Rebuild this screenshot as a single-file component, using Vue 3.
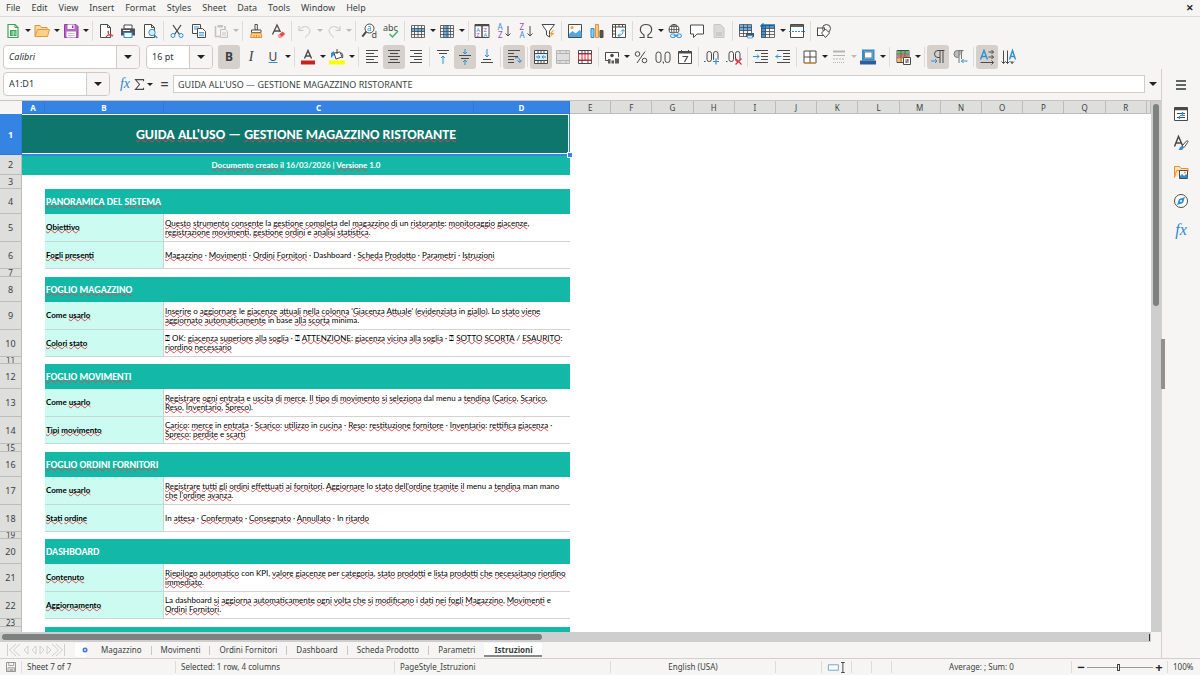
<script setup>
const menus = ['File', 'Edit', 'View', 'Insert', 'Format', 'Styles', 'Sheet', 'Data', 'Tools', 'Window', 'Help']

const K = '#4a4a4a'
const B = '#2d8fd6'
const tableGrid = `<path d="M1.5 2.5h13v12h-13zM1.5 5.5h13M1.5 8.5h13M1.5 11.500h13M4.5 2.5v12M8 2.5v12M11.500 2.5v12" fill="none" stroke="${K}" stroke-width=".8"/>`
const lines = (rows) => rows.map(([x1, x2, y]) => `<path d="M${x1} ${y}H${x2}" stroke="${K}"/>`).join('')
const letter = (x, y, t, c, s = 7) => `<text x="${x}" y="${y}" fill="${c}" font-size="${s}" font-family="Noto Sans, sans-serif">${t}</text>`

const art = {
  new: `<path d="M3 1.5h7l3 3v10H3z" fill="#fff" stroke="#3fa455" stroke-width="1.2"/><path d="M10 1.500v3h3" fill="none" stroke="#3fa455"/><path d="M5 7h6.500v6H5z" fill="#3fa455"/><path d="M6 9h5M6 11h5M8.300 8v5" stroke="#d8f3dd" stroke-width=".7"/>`,
  open: `<path d="M1 13V2.500h5l1.500 2h5.500V7" fill="#f9d9a0" stroke="#d99540"/><path d="M1 13.500 3.500 6.500h12l-2 7z" fill="#fbcf86" stroke="#e09a45"/>`,
  save: `<path d="M1.500 1.500h11.500l2 2v11H1.500z" fill="#b665c4" stroke="#8f3ea3"/><path d="M4.500 1.500h7v4.500h-7z" fill="#fff"/><path d="M9 2.500h1.500v2.500H9z" fill="#8f3ea3"/><path d="M3.500 8.500h9.500v6H3.500z" fill="#fff"/><path d="M5 10.500h6.500M5 12.500h6.500" stroke="#cdb5d3"/>`,
  pdf: `<path d="M2.500 1.500h7l3 3v10h-10z" fill="#fff" stroke="${K}"/><path d="M9.500 1.500v3h3" fill="none" stroke="${K}"/><path d="M8 14c2-1 3-4 2.500-5.500-.6-1.500-1 .5 0 2 1 1.500 2.500 2.500 4 2.500 1.500-.5-1-1.500-3-1-2 .3-3.500 1.200-3.500 2z" fill="#fff" stroke="#d6293a"/>`,
  print: `<path d="M4 2h8v4H4z" fill="#fff" stroke="${K}"/><path d="M1 5.500h14v7H1z" fill="#4f5357"/><path d="M4 9.500h8v5H4z" fill="#fff" stroke="${B}"/><path d="M3 7.500h7" stroke="#fff"/>`,
  preview: `<path d="M2.500 1.500h7l3 3v10h-10z" fill="#fff" stroke="${K}"/><path d="M9.500 1.500v3h3" fill="none" stroke="${K}"/><circle cx="10" cy="9.500" r="3.200" fill="#d7ecfa" stroke="${B}"/><path d="m12.300 12 3 3" stroke="${B}" stroke-width="1.300"/>`,
  cut: `<path d="M4 2l6.500 9.500M12 2 5.500 11.500" stroke="${K}" stroke-width="1.300"/><circle cx="4" cy="12.500" r="2" fill="none" stroke="${B}"/><circle cx="12" cy="12.500" r="2" fill="none" stroke="${B}"/>`,
  copy: `<path d="M1.500 1.500h8v9h-8z" fill="#fff" stroke="${K}"/><path d="M3 4h5M3 6h3" stroke="${B}"/><path d="M6.500 5.500h5l3 3v6h-8z" fill="#fff" stroke="${K}"/><path d="M8 9.500h5M8 11h5M8 12.700h5" stroke="${B}" stroke-width=".8"/>`,
  paste: `<path d="M2.500 3v10.500H7M12 3v3" fill="none" stroke="#c2c2c2" stroke-width="1.600"/><path d="M4.500 2h5.500v2.500H4.500z" fill="#c2c2c2"/><path d="M7.500 6.500h5l2 2v6h-7z" fill="#f2f2f2" stroke="#c2c2c2"/><path d="M9 10h4M9 12h4" stroke="#c9c9c9"/>`,
  brush: `<path d="M7 1.500h2.300v5.500H7z" fill="#fff" stroke="${K}"/><path d="M3.500 7h9.500v2.500H3.500z" fill="#fff" stroke="${K}"/><path d="M3.500 10h9.500l.8 4.500H2.500z" fill="#fbd39a" stroke="#e8912d"/><path d="M6 12v2M8.500 12v2M11 12v2" stroke="#e8912d"/>`,
  clear: `<path d="M2.500 11.500 7 2l3.500 7M4.500 8h5" fill="none" stroke="${K}" stroke-width="1.300"/><path d="m8 12.500 4.500-4 2.700 2.500-4.500 4H9z" fill="#e5484d"/><path d="m7.500 12.500 1.700-1.500 2.500 2.700-1.200 1H9z" fill="#f5a3a5"/>`,
  undo: `<path d="M2 3v4.500h4.500M2 7.500C4 4 8 2.500 11 4.500c3.500 2.500 2 6-3 10" fill="none" stroke="#c6c6c6"/>`,
  redo: `<path d="M14 3v4.500H9.500M14 7.500C12 4 8 2.500 5 4.500 1.500 7 3 10.500 8 14.500" fill="none" stroke="#c6c6c6"/>`,
  find: `<circle cx="8.500" cy="5.500" r="4.500" fill="#fff" stroke="${K}"/><path d="m5.300 8.700-4 5" stroke="${K}" stroke-width="2"/>${letter(6, 8, 'a', B, 8)}${letter(10.500, 15, 'd', K, 9)}`,
  spell: `${letter(0, 8, 'abc', K, 9)}<path d="m6.500 11 3 3 5.500-6" fill="none" stroke="#43b36b" stroke-width="1.500"/>`,
  row: `<path d="M1 5h14v4H1z" fill="#64b1ec"/>${tableGrid}`,
  col: `<path d="M5 2h5v13H5z" fill="#64b1ec"/>${tableGrid}`,
  sort: `<path d="M1 1.500h14v13H1z" fill="#fff" stroke="${K}"/><path d="M1 2.500h14M8 2v12" stroke="${K}" stroke-width="1.500"/>${letter(2.200, 8.800, 'A', B, 6)}${letter(2.200, 14, 'Z', '#a347ba', 6)}${letter(9.500, 8.800, 'Z', '#a347ba', 6)}${letter(9.500, 14, 'A', B, 6)}`,
  az: `${letter(1.500, 7, 'A', B, 8)}${letter(2, 15, 'Z', '#a347ba', 8)}<path d="M12 3v10M9.500 10.500 12 13l2.500-2.500" fill="none" stroke="${K}"/>`,
  za: `${letter(1.500, 7, 'Z', '#a347ba', 8)}${letter(1.500, 15, 'A', B, 8)}<path d="M12 3v10M9.500 10.500 12 13l2.500-2.500" fill="none" stroke="${K}"/>`,
  filter: `<path d="M2 1.500h12.500L9.500 8v6L6.500 12V8z" fill="#fff" stroke="${K}"/><path d="m13 7-4 4.500h2.500L9.500 15l5-5h-2.500l2-3z" fill="#f5a040"/>`,
  image: `<path d="M1.500 1.500h13v13h-13z" fill="#fff" stroke="${K}"/><path d="m2 14 0-3 3.500-3 3 2.500 4-3.500 2 2V14z" fill="#4fa8e6"/><circle cx="5" cy="4.500" r="1.600" fill="#f3a143"/>`,
  chart: `<path d="M2 5.500h3v9H2z" fill="#8fcaf5" stroke="${B}"/><path d="M6.500 1.500h3v13h-3z" fill="#fbc987" stroke="#e8912d"/><path d="M11 7.500h3v7h-3z" fill="#555" stroke="${K}"/>`,
  pivot: `<path d="M1.500 1.500h13v13h-13z" fill="#fff" stroke="${K}"/><path d="M2 4h12M4.500 2v12M8 2v2M11.500 2v2M2 8h2M2 11h2" stroke="${K}"/><path d="M7 12.500c4 0 5-2 5-5.500M7 12.500l2-2M7 12.500l2 1.800M12 6.500l-2 2M12 6.500l2 2" fill="none" stroke="${B}"/>`,
  omega: `<path d="M1.500 14.500H6V12C0 8 2 1.500 8 1.500S16 8 10 12v2.500h4.500" fill="none" stroke="${K}" stroke-width="1.200"/>`,
  link: `<circle cx="7" cy="6.500" r="5" fill="#fff" stroke="${K}"/><path d="M2 6.500h10M7 1.500v10M3 3.500h8M3 9.300h8" stroke="${K}" stroke-width=".8"/><ellipse cx="7" cy="6.500" rx="2.500" ry="5" fill="none" stroke="${K}" stroke-width=".8"/><path d="M3 10h12v6H3z" fill="#f6f5f4"/><rect x="3.500" y="11" width="5" height="3.500" rx="1.700" fill="none" stroke="${B}"/><rect x="9.500" y="11" width="5" height="3.500" rx="1.700" fill="none" stroke="${B}"/><path d="M6.500 12.700h5" stroke="${B}"/>`,
  comment: `<path d="M1.500 2h13v9H8l-3.500 3.500V11h-3z" fill="#fff" stroke="${K}"/>`,
  header: `<path d="M3 1.500h6.500l3.500 3.500v9.500H3z" fill="#dadada" stroke="#c6c6c6"/><path d="M5 12h6M5 10h6" stroke="#bcbcbc"/>`,
  printarea: `<path d="M1 2h13v6H1z" fill="#64b1ec"/><path d="M1.500 1.500h12v12h-12zM1.500 4.500h12M1.500 7.500h12M1.500 10.500h12M5.500 1.500v12M9.500 1.500v12" fill="none" stroke="${K}" stroke-width=".8"/><path d="M8 10h8v4H8z" fill="#44535f"/><path d="M9.500 12.500h5v2.500h-5z" fill="#d7ecfa" stroke="${B}" stroke-width=".7"/>`,
  freeze: `<path d="M1 1h14v4.500H6V15H1z" fill="#4198dc"/><path d="M1.500 2.500h13v12h-13zM1.500 5.500h13M1.500 8.500h13M1.500 11.500h13M5.500 2.500v12M9.500 2.500v12" fill="none" stroke="${K}" stroke-width=".8"/><path d="M0 3h6M3 0v6" stroke="#1565a9"/>`,
  split: `<path d="M1.500 1.500h13v3h-13z" fill="#606468" stroke="${K}"/><path d="M1.500 4v10.500h13V4" fill="#fff" stroke="${K}"/><path d="M0 8.500h16" stroke="${B}" stroke-dasharray="2 1"/>`,
  shapes: `<rect x="1.500" y="5" width="7" height="7.500" fill="#fff" stroke="${K}"/><circle cx="10.500" cy="5.500" r="4" fill="none" stroke="${K}"/><path d="m9.500 6 4 4-4 4.500-4-4.500z" fill="#fff" stroke="${K}"/>`,
  fontcolor: `<path d="m4.500 9.500 3.500-8 3.500 8M5.700 7h4.600" fill="none" stroke="${K}" stroke-width="1.400"/><path d="M1 11.500h14v4H1z" fill="#c9211e"/>`,
  highlight: `<path d="m5 4 6-1 2 5-6 2z" fill="#fff" stroke="${K}"/><path d="M8 0v5M12 4c2 0 2 3 1.500 5" fill="none" stroke="${K}"/><path d="M2 9V4l3-2v4z" fill="${B}"/><path d="M0 11.500h16v4H0z" fill="#ffff00"/>`,
  left: lines([[2, 14, 1.500], [2, 10, 4.500], [2, 14, 7.500], [2, 10, 10.500], [2, 14, 13.500]]),
  center: lines([[2, 14, 1.500], [4, 12, 4.500], [2, 14, 7.500], [4, 12, 10.500], [2, 14, 13.500]]),
  right: lines([[2, 14, 1.500], [6, 14, 4.500], [2, 14, 7.500], [6, 14, 10.500], [2, 14, 13.500]]),
  top: lines([[2, 14, 1.500], [4, 12, 4.500]]) + `<path d="M8 15V7M6 9l2-2 2 2" fill="none" stroke="${B}"/>`,
  middle: lines([[2, 14, 6.500], [4, 12, 9.500]]) + `<path d="M8 0v5M6 3l2 2 2-2M8 16v-5M6 13l2-2 2 2" fill="none" stroke="${B}"/>`,
  bottom: lines([[4, 12, 10.500], [2, 14, 13.500]]) + `<path d="M8 0v8M6 6l2 2 2-2" fill="none" stroke="${B}"/>`,
  wrap: lines([[2, 14, 1.500], [2, 8, 4.500], [2, 12, 7.500], [2, 8, 10.500], [2, 8, 13.500]]) + `<path d="M9 9c3-1 5 0 5 4M11.500 11.500l2.500 2 1.500-2.500" fill="none" stroke="${B}"/>`,
  merge: `<path d="M1.500 1.500h13v13h-13zM1.500 4.500h13M1.500 11.500h13M5 1.500v13M8 1.500v3M11 1.500v13M8 11.500v3" fill="#fff" stroke="${K}"/><path d="M2 5h12v6H2z" fill="#d7ecfa"/><path d="M3 8h4M9 8h4M5.500 6.500 7 8 5.500 9.500M10.500 6.500 9 8l1.500 1.500" fill="none" stroke="${B}"/>`,
  mergec: `<path d="M1.500 1.500h13v13h-13zM1.500 4.500h13M1.500 11.500h13M5 1.500v3M11 1.500v3M5 11.500v3M11 11.500v3" fill="#dedede" stroke="#b4b4b4"/>`,
  unmerge: `<path d="M1.500 1.500h13v13h-13zM1.500 4.500h13M1.500 11.500h13M5 1.500v13M11 1.500v13M8 1.500v3" fill="#fff" stroke="${K}"/><path d="M1.500 5h13v6h-13zM5 5v6M8 5v6M11 5v6" fill="#fff" stroke="#d6293a"/>`,
  currency: `<path d="M1.500 11.500v-8h13V8" fill="#fff" stroke="${K}"/><path d="M1.500 11.500H6" stroke="${K}"/><circle cx="8" cy="6.500" r="1.800" fill="${K}"/><path d="M4 10h2.500v4.500H4zM7.500 11.500H10v3H7.500zM11 9.500h4v5h-4z" fill="#5b5b5b"/>`,
  percent: `<circle cx="4.500" cy="5" r="2.300" fill="none" stroke="${K}"/><circle cx="11.500" cy="11.500" r="2.300" fill="none" stroke="${K}"/><path d="M12 2.500 4 14" stroke="${K}"/>`,
  number: `<rect x="1" y="3" width="5" height="10.500" rx="2.500" fill="none" stroke="${K}"/><rect x="10" y="3" width="5" height="10.500" rx="2.500" fill="none" stroke="${K}"/><path d="M7.500 13h1v1.500" fill="none" stroke="${K}"/>`,
  date: `<path d="M1.500 2.500h13v12h-13z" fill="#fff" stroke="${K}"/><path d="M1.500 3.500h13" stroke="${K}" stroke-width="2"/><path d="M5.500 7.500h5L7.500 13" fill="none" stroke="${K}" stroke-width="1.200"/><path d="M4.500 1v2M11.500 1v2" stroke="${K}"/>`,
  adddec: `<path d="M0 12.500h1.500" stroke="${K}"/><rect x="3" y="2.500" width="4.500" height="10" rx="2.200" fill="none" stroke="${K}"/><rect x="9.500" y="2.500" width="4.500" height="10" rx="2.200" fill="none" stroke="${K}"/><path d="M9 12.500h6M12 9.500v6" stroke="#f6f5f4" stroke-width="3"/><path d="M9 12.500h6M12 9.500v6" stroke="${B}" stroke-width="1.200"/>`,
  deldec: `<path d="M0 12.500h1.500" stroke="${K}"/><rect x="3" y="2.500" width="4.500" height="10" rx="2.200" fill="none" stroke="${K}"/><rect x="9.500" y="2.500" width="4.500" height="10" rx="2.200" fill="none" stroke="${K}"/><path d="m9.500 9.500 6 6M15.500 9.500l-6 6" stroke="#e0333c" stroke-width="1.300"/>`,
  indent: lines([[2, 15, 1.500], [8, 15, 4.500], [8, 15, 7.500], [8, 15, 10.500], [2, 15, 13.500]]) + `<path d="M0 7.500h6M4 5.500l2 2-2 2" fill="none" stroke="${B}"/>`,
  outdent: lines([[2, 15, 1.500], [8, 15, 4.500], [8, 15, 7.500], [8, 15, 10.500], [2, 15, 13.500]]) + `<path d="M6.500 7.500h-6M3 5.500l-2 2 2 2" fill="none" stroke="${B}"/>`,
  border: `<path d="M2 2h12v12H2z" fill="#fff" stroke="${K}"/><path d="M8 2v12M2 8h12" stroke="${K}"/><path d="M2 14h12" stroke="#e8912d"/>`,
  linestyle: `<path d="M2 2.500h12" stroke="#b5b5b5" stroke-width="2"/><path d="M2 6.500h12" stroke="#b5b5b5"/><path d="M2 10h12" stroke="#b5b5b5" stroke-dasharray="2 1"/><path d="M2 13.500h12" stroke="#b5b5b5" stroke-dasharray="1 1"/>`,
  linecolor: `<path d="M3 1.500h10.500v9H3z" fill="none" stroke="${B}" stroke-width="2"/><path d="M4.500 3h7.500v6H4.500z" fill="#fff" stroke="${K}" stroke-width=".7"/><path d="M0 11.500h16v4H0z" fill="#2a6099"/>`,
  cond: `<path d="M2 1.500h12v12H2z" fill="#fff" stroke="${K}"/><path d="M2.500 2h11v3h-11z" fill="#58bd78"/><path d="M2.500 5.500h11v3h-11z" fill="#ef6b62"/><path d="M2.500 9h5v4h-5z" fill="#f8bd6b"/><path d="M2 5.300h12M2 8.800h12M6 1.500v12M10 1.500v6" stroke="${K}" stroke-width=".6"/><path d="M8.500 8.500h7v7h-7z" fill="#fff" stroke="${K}"/><path d="M10 11h4M10 13h4M13 10l-2 4" stroke="${K}" stroke-width=".8"/>`,
  ltr: `<path d="M14.500 1.500H8a3.500 3.500 0 0 0 0 7h2M10 1.500V14M13 1.500V14" fill="none" stroke="${K}"/><path d="M1 12h6M5 10l2 2-2 2" fill="none" stroke="${B}"/>`,
  rtl: `<path d="M11.500 1.500H5.500a3.500 3.500 0 0 0 0 7h1z" fill="#bdbdbd"/><path d="M11.500 1.500H5.500a3.500 3.500 0 0 0 0 7h1M7 1.500V14M9.500 1.500V10" fill="none" stroke="#777"/><path d="M15.500 12h-6M11.500 10l-2 2 2 2" fill="none" stroke="${B}"/>`,
  hortext: `<path d="m1.500 10.500 3.500-9 3.500 9M2.800 7.500h4.500" fill="none" stroke="${B}" stroke-width="1.400"/><path d="M9.500 3h5M12.500 1l2 2-2 2M9.500 8h5M12.500 6l2 2-2 2M1.500 13.500h13M12.500 11.500l2 2-2 2" fill="none" stroke="${K}"/>`,
  vertext: `<path d="m8.500 10.500 3-9 3 9M9.500 7.500h4" fill="none" stroke="${B}" stroke-width="1.400"/><path d="M2.500 1.500v13M.5 12.500l2 2 2-2M6.500 1.500v13M4.500 12.500l2 2 2-2M11 12v2.500M9.500 12.500l1.500 2 2-2" fill="none" stroke="${K}"/>`,
  sum: `<path d="M13 4V2H3l5 6-5 6h10v-2" fill="none" stroke="${K}" stroke-width="1.300"/>`,
  hamburger: `<path d="M3 4h10M3 8h10M3 12h10" stroke="#2e3436" stroke-width="1.500"/>`,
  properties: `<path d="M1.500 1.500h13v13h-13z" fill="#fff" stroke="${K}"/><path d="M1.500 3h13" stroke="${K}" stroke-width="2.500"/><path d="M4 7.500h8M4 11.500h8" stroke="${K}"/><path d="M9.500 6v3M6.500 10v3" stroke="${B}" stroke-width="1.300"/><path d="M7 9.500h5" stroke="${B}"/>`,
  styles: `<path d="m1.500 11.500 4-10 4 9M3 8h6" fill="none" stroke="${K}" stroke-width="1.500"/><path d="m9 11 4.500-5c1-.8 2 .2 1.300 1.200L11 12.500z" fill="#fff" stroke="${K}"/><path d="M5 15c1.500 0 1.500-3.500 3.500-3.800C11 11 11 15 8 15z" fill="${B}"/>`,
  gallery: `<path d="M1.500 13.500v-11h5l1.500 2h7v3" fill="#fce3bd" stroke="#e8912d"/><path d="m1.500 13.500 2-7h5" fill="none" stroke="#e8912d"/><path d="M6.500 6.500h8v8h-8z" fill="#fff" stroke="${K}"/><path d="m7 14 0-2 2-2 2 2 2-2 1.500 1.500V14z" fill="${B}"/><circle cx="12" cy="8.500" r="1" fill="#e8912d"/>`,
  navigator: `<circle cx="8" cy="8" r="6.500" fill="#fff" stroke="${K}"/><path d="m12 4-2 6-6 2 2-6z" fill="${B}"/><circle cx="8" cy="8" r="1" fill="#fff"/>`,
  disk: `<path d="M2 2h12v12H2z" fill="#f6f5f4" stroke="#777"/><path d="M5 2v4h6.500V2M4 14V9h8.500v5M6 11h5M6 12.500h5" fill="none" stroke="#888"/>`,
  addsheet: `<path d="M1 0h11v14H3l-2-2z" fill="#fff"/><circle cx="11" cy="7" r="2.500" fill="#3b6fc4"/><path d="M9.800 7h2.400M11 5.800v2.400" stroke="#fff" stroke-width=".8"/>`,
}

const bar1 = [
  ['new', 'a'], ['open', 'a'], ['save', 'a'], '|', ['pdf'], ['print'], ['preview'], '|', ['cut'], ['copy'], ['paste', 'd'], '|',
  ['brush'], ['clear'], '|', ['undo', 'd'], ['redo', 'd'], '|', ['find'], ['spell'], '|', ['row', 'a'], ['col', 'a'], '|',
  ['sort'], ['az'], ['za'], ['filter'], '|', ['image'], ['chart'], ['pivot'], '|', ['omega', 'a'], ['link'], ['comment'], ['header'], '|',
  ['printarea'], ['freeze', 'a'], ['split'], '|', ['shapes'],
]
const bar2 = [
  ['bold', 'on'], ['italic'], ['underline', 'a'], '|', ['fontcolor', 'a'], ['highlight', 'a'], '|', ['left'], ['center', 'on'], ['right'], '|',
  ['top'], ['middle', 'on'], ['bottom'], '|', ['wrap', 'on'], '|', ['merge', 'on'], ['mergec'], ['unmerge'], '|',
  ['currency', 'a'], ['percent'], ['number'], ['date'], '|', ['adddec'], ['deldec'], '|', ['indent'], ['outdent'], '|',
  ['border', 'a'], ['linestyle', 'd'], ['linecolor', 'a'], '|', ['cond', 'a'], '|', ['ltr', 'on'], ['rtl'], '|', ['hortext', 'on'], ['vertext'],
]
const glyphs = { bold: 'B', italic: 'I', underline: 'U' }

const plainCols = 'EFGHIJKLMNOPQR'.split('')

// Words wrapped in *…* carry the spell checker's wavy line.
const parse = (s) => s.split('*').map((text, i) => ({ text, bad: i % 2 === 1 }))
const section = (title, rows, gap) => ({ title, rows, gap })
const raw = [
  section('*PANORAMICA* DEL *SISTEMA*', [
    ['*Obiettivo*', '*Questo* *strumento* *consente* la *gestione* *completa* del *magazzino* *di* un *ristorante*: *monitoraggio* *giacenze*,', '*registrazione* *movimenti*, *gestione* *ordini* e *analisi* *statistica*.'],
    ['*Fogli* *presenti*', '*Magazzino* · *Movimenti* · *Ordini* *Fornitori* · Dashboard · *Scheda* *Prodotto* · *Parametri* · *Istruzioni*'],
  ], 'gap8'),
  section('*FOGLIO* *MAGAZZINO*', [
    ['Come *usarlo*', "*Inserire* o *aggiornare* le *giacenze* *attuali* *nella* *colonna* '*Giacenza* *Attuale*' (*evidenziata* in *giallo*). Lo *stato* *viene*", '*aggiornato* *automaticamente* in base *alla* *scorta* minima.'],
    ['*Colori* *stato*', '⍰ OK: *giacenza* *superiore* *alla* *soglia* · ⍰ *ATTENZIONE*: *giacenza* *vicina* *alla* *soglia* · ⍰ *SOTTO* *SCORTA* / *ESAURITO*:', '*riordino* *necessario*'],
  ], 'gap7'),
  section('*FOGLIO* *MOVIMENTI*', [
    ['Come *usarlo*', '*Registrare* *ogni* *entrata* e *uscita* *di* *merce*. *Il* *tipo* *di* *movimento* *si* *seleziona* dal menu a *tendina* (*Carico*, *Scarico*,', '*Reso*, *Inventario*, *Spreco*).'],
    ['*Tipi* *movimento*', '*Carico*: *merce* in *entrata* · *Scarico*: *utilizzo* in *cucina* · *Reso*: *restituzione* *fornitore* · *Inventario*: *rettifica* *giacenza* ·', '*Spreco*: *perdite* e *scarti*'],
  ], 'gap8'),
  section('*FOGLIO* *ORDINI* *FORNITORI*', [
    ['Come *usarlo*', "*Registrare* *tutti* *gli* *ordini* *effettuati* *ai* *fornitori*. *Aggiornare* lo *stato* *dell'ordine* *tramite* *il* menu a *tendina* man mano", "*che* *l'ordine* *avanza*."],
    ['*Stati* *ordine*', 'In *attesa* · *Confermato* · *Consegnato* · *Annullato* · In *ritardo*'],
  ], 'gap7'),
  section('DASHBOARD', [
    ['*Contenuto*', '*Riepilogo* *automatico* con KPI, *valore* *giacenze* per *categoria*, *stato* *prodotti* e *lista* *prodotti* *che* *necessitano* *riordino*', '*immediato*.'],
    ['*Aggiornamento*', 'La dashboard *si* *aggiorna* *automaticamente* *ogni* *volta* *che* *si* *modificano* i *dati* *nei* *fogli* *Magazzino*, *Movimenti* e', '*Ordini* *Fornitori*.'],
  ], 'gap8'),
]
const sheetRows = []
let n = 4
for (const s of raw) {
  sheetRows.push({ n: n++, kind: 'head', label: parse(s.title) })
  s.rows.forEach(([label, ...text], i) => sheetRows.push({ n: n++, kind: i ? 'last' : 'first', label: parse(label), text: text.map(parse) }))
  sheetRows.push({ n: n++, kind: s.gap })
}
sheetRows.push({ n: '', kind: 'head', label: [] })

const tabs = ['Magazzino', 'Movimenti', 'Ordini Fornitori', 'Dashboard', 'Scheda Prodotto', 'Parametri', 'Istruzioni']
const side = ['properties', 'styles', 'gallery', 'navigator']
</script>

<template>
  <div class="app">
    <nav class="menu">
      <button v-for="m in menus" :key="m">{{ m }}</button>
      <button class="close" aria-label="Close">✕</button>
    </nav>
    <div class="toolbar">
      <template v-for="(it, i) in bar1" :key="i">
        <span v-if="it === '|'" class="sep"></span>
        <template v-else>
          <button class="tool" :aria-label="it[0]"><svg viewBox="0 0 16 16" v-html="art[it[0]]"></svg></button>
          <button v-if="it[1]" class="drop" :class="{ dim: it[1] === 'd' }" :aria-label="it[0] + ' options'"></button>
        </template>
      </template>
    </div>
    <div class="toolbar second">
      <div class="combo font"><input class="it" value="Calibri" aria-label="Font name"><button aria-label="Fonts"></button></div>
      <div class="combo size"><input value="16 pt" aria-label="Font size"><button aria-label="Sizes"></button></div>
      <template v-for="(it, i) in bar2" :key="i">
        <span v-if="it === '|'" class="sep"></span>
        <template v-else>
          <button class="tool" :class="[it[0], { on: it[1] === 'on' }]" :aria-label="it[0]">
            <template v-if="glyphs[it[0]]">{{ glyphs[it[0]] }}</template>
            <svg v-else viewBox="0 0 16 16" v-html="art[it[0]]"></svg>
          </button>
          <button v-if="it[1] === 'a' || it[1] === 'd'" class="drop" :class="{ dim: it[1] === 'd' }" :aria-label="it[0] + ' options'"></button>
        </template>
      </template>
    </div>

    <div class="body">
      <main class="work">
        <div class="formula">
          <div class="combo name"><input value="A1:D1" aria-label="Name box"><button aria-label="Names"></button></div>
          <button class="fx" aria-label="Function wizard">fx</button>
          <button class="mini" aria-label="Sum"><svg viewBox="0 0 16 16" v-html="art.sum"></svg></button>
          <button class="drop" aria-label="Sum options"></button>
          <button class="eq" aria-label="Formula">=</button>
          <input class="line" value="GUIDA ALL'USO — GESTIONE MAGAZZINO RISTORANTE" aria-label="Input line">
          <button class="drop expand" aria-label="Expand"></button>
        </div>
        <div class="sheet">
          <div class="view">
            <table>
              <colgroup>
                <col class="c0"><col class="ca"><col class="cb"><col class="cc"><col class="cd">
                <col v-for="c in plainCols" :key="c"><col class="ce">
              </colgroup>
              <thead>
                <tr>
                  <td class="corner"></td>
                  <th class="sel">A</th><th class="sel">B</th><th class="sel">C</th><th class="sel">D</th>
                  <th v-for="c in plainCols" :key="c">{{ c }}</th><th></th>
                </tr>
              </thead>
              <tbody>
                <tr class="r1">
                  <th class="sel">1</th>
                  <td class="title" colspan="4"><s>GUIDA</s> <s>ALL'USO</s> — <s>GESTIONE</s> <s>MAGAZZINO</s> <s>RISTORANTE</s><i class="handle"></i></td>
                  <td colspan="15"></td>
                </tr>
                <tr class="r2">
                  <th>2</th>
                  <td class="sub" colspan="4"><s>Documento</s> <s>creato</s> <s>il</s> 16/03/2026 | <s>Versione</s> 1.0</td>
                  <td colspan="15"></td>
                </tr>
                <tr class="r3"><th>3</th><td colspan="19"></td></tr>
                <tr v-for="(r, i) in sheetRows" :key="i" :class="r.kind">
                  <th><div>{{ r.n }}</div></th>
                  <template v-if="r.kind === 'head'">
                    <td></td>
                    <td class="banner" colspan="3"><template v-for="(p, j) in r.label" :key="j"><s v-if="p.bad">{{ p.text }}</s><template v-else>{{ p.text }}</template></template></td>
                    <td colspan="15"></td>
                  </template>
                  <template v-else-if="r.text">
                    <td></td>
                    <td class="key"><template v-for="(p, j) in r.label" :key="j"><s v-if="p.bad">{{ p.text }}</s><template v-else>{{ p.text }}</template></template></td>
                    <td class="txt" colspan="2">
                      <div v-for="(l, k) in r.text" :key="k"><template v-for="(p, j) in l" :key="j"><s v-if="p.bad">{{ p.text }}</s><template v-else>{{ p.text }}</template></template></div>
                    </td>
                    <td colspan="15"></td>
                  </template>
                  <td v-else colspan="19"></td>
                </tr>
              </tbody>
            </table>
          </div>
          <div class="vscroll"><span></span></div>
        </div>
        <div class="hscroll"><span></span><b></b></div>
        <div class="tabs">
          <svg class="navs" viewBox="0 0 60 14"><path d="M1.500 1v12M10 1 3.500 7l6.500 6M14 1 7.500 7l6.500 6M22 3l-4 4 4 4zM30 3l-4 4 4 4zM34 3l4 4-4 4zM41 3l4 4-4 4zM46 1l6.500 6-6.500 6M50 1l6.500 6-6.500 6M58.500 1v12" fill="none" stroke="#d0cfcd" /></svg>
          <button class="add" aria-label="Add sheet"><svg viewBox="0 0 14 14" v-html="art.addsheet"></svg></button>
          <button v-for="t in tabs" :key="t" class="tab" :class="{ active: t === 'Istruzioni' }">{{ t }}</button>
        </div>
      </main>
      <aside class="side">
        <button aria-label="Sidebar settings"><svg viewBox="0 0 16 16" v-html="art.hamburger"></svg></button>
        <button v-for="s in side" :key="s" :aria-label="s"><svg viewBox="0 0 16 16" v-html="art[s]"></svg></button>
        <button class="fx" aria-label="Functions">fx</button>
      </aside>
      <div class="grip"></div>
    </div>

    <footer class="status">
      <span class="ico"><svg viewBox="0 0 16 16" v-html="art.disk"></svg></span>
      <span>Sheet 7 of 7</span>
      <span>Selected: 1 row, 4 columns</span>
      <span>PageStyle_Istruzioni</span>
      <span class="mid">English (USA)</span>
      <span></span>
      <span class="ico"><svg class="mode" viewBox="0 0 22 14"><path d="M1.500 4h11v6h-11z" fill="#fff" stroke="#5aa5d8" /><path d="M15.500 1.500h4M17.500 1.500v11M15.500 12.500h4" stroke="#3a3a3a" /></svg></span>
      <span></span>
      <span></span>
      <span class="mid">Average: ; Sum: 0</span>
      <span class="zoom"><button aria-label="Zoom out">−</button><input type="range" min="0" max="100" value="48" aria-label="Zoom"><button aria-label="Zoom in">+</button></span>
      <span>100%</span>
    </footer>
  </div>
</template>

<style>
html, body, #app { height: 100%; }
body { margin: 0; overflow: hidden; }
</style>

<style scoped>
.app {
  height: 100vh; display: flex; flex-direction: column; overflow: hidden;
  background: #f6f5f4; color: #3b3f41; font: 9px/12px "Noto Sans", sans-serif;
}
button { border: 0; background: none; padding: 0; margin: 0; font: inherit; color: inherit; }
input { font: inherit; color: inherit; min-width: 0; margin: 0; outline: 0; }
svg { display: block; width: 16px; height: 16px; overflow: visible; }
.menu { display: flex; height: 16px; padding: 0 6px; gap: 11px; align-items: center; border-bottom: 1px solid #dddbd8; }
.menu .close { margin-left: auto; font-size: 9px; font-weight: 700; color: #222; }
.toolbar { display: flex; align-items: center; height: 27px; padding-left: 2px; flex: none; }
.second { height: 25px; padding-left: 3px; }
.tool { width: 22px; height: 24px; display: flex; align-items: center; justify-content: center; border-radius: 3px; flex: none; }
.tool.on { background: #d5d0cc; }
.bold, .italic, .underline { font-size: 12px; line-height: 16px; }
.bold { font-weight: 700; }
.italic { font-family: "Liberation Serif", serif; font-style: italic; font-size: 14px; }
.underline { text-decoration: underline; text-decoration-color: #2d8fd6; }
.drop { width: 7px; height: 16px; display: flex; align-items: center; justify-content: center; flex: none; }
.drop::before, .combo button::before { content: ""; border: 3px solid transparent; border-top-color: #222; border-bottom: 0; }
.drop.dim::before { border-top-color: #bbb; }
.sep { width: 5px; height: 20px; flex: none; background: linear-gradient(#dedcd9, #dedcd9) center / 1px 100% no-repeat; }
.drop + .sep { width: 6px; }
.combo { display: flex; box-sizing: border-box; height: 24px; border: 1px solid #cfcac6; border-radius: 4px; background: #fff; flex: none; overflow: hidden; }
.combo input { flex: 1; border: 0; padding: 0 0 0 5px; background: none; color: #2e3436; }
.combo button { width: 23px; border-left: 1px solid #cfcac6; background: #f6f5f4; display: flex; align-items: center; justify-content: center; }
.combo button::before { border-width: 4px; border-bottom: 0; }
.it { font-style: italic; }
.font { width: 137px; margin-right: 6px; }
.size { width: 67px; margin-right: 5px; }
.name { width: 107px; }

.body { flex: 1; min-height: 0; display: flex; position: relative; }
.work { flex: 1; min-width: 0; display: flex; flex-direction: column; }
.formula { display: flex; align-items: center; height: 26px; margin: 2px 0 3px; padding-left: 3px; flex: none; }
.fx { font: italic 14px/16px "Liberation Serif", serif; color: #2d87cf; }
.formula .fx { margin-left: 9px; width: 12px; }
.mini { margin-left: 2px; }
.mini svg { width: 13px; height: 13px; }
.eq { margin: 0 4px 0 7px; font-size: 14px; font-weight: 600; width: 9px; }
.line { flex: 1; height: 18px; box-sizing: border-box; border: 1px solid #cfcdca; background: #fff; padding: 0 4px; }
.expand { width: 16px; }
.expand::before { border-width: 4px; border-bottom: 0; }
.sheet { flex: 1; min-height: 0; display: flex; }
.view { flex: 1; min-width: 0; overflow: hidden; background: #fff; border-top: 1px solid #c4c4c4; }
table { width: 100%; table-layout: fixed; border-collapse: separate; border-spacing: 0; }
.c0 { width: 22px; } .ca { width: 23px; } .cb { width: 119px; } .cc { width: 310px; } .cd { width: 96px; } .ce { width: 4px; }
th, td { padding: 0; height: inherit; box-sizing: border-box; white-space: nowrap; overflow: hidden; }
th { font-size: 8px; line-height: 11px; font-weight: 400; background: #dededc; color: #3b3f41; border-right: 1px solid #bcbcba; border-bottom: 1px solid #bcbcba; }
thead tr { height: 13px; }
.corner { background: #f6f5f4; }
th.sel { background: #3584e4; color: #fff; font-weight: 700; border-color: #2f79d4; }
tbody th { font-size: 9px; }
tbody th div { display: flex; align-items: center; justify-content: center; overflow: hidden; }
.r1 { height: 41px; } .r2 { height: 20px; } .r3 { height: 14px; }
.head { height: 25px; } .first { height: 28px; } .last { height: 27px; } .gap8 { height: 8px; } .gap7 { height: 7px; }
.gap8 th, .gap7 th { line-height: 6px; font-size: 8px; }
.gap8 th div { height: 7px; } .gap7 th div { height: 6px; }
td { font-family: Lato, sans-serif; font-size: 8px; line-height: 9px; color: #000; }
s { text-decoration: underline wavy #d9484f 1px; text-underline-offset: -1px; text-decoration-skip-ink: none; }
.title, .banner { font-family: Carlito, Lato, sans-serif; font-weight: 700; color: #fff; }
.title { background: #0f766e; font-size: 14px; line-height: 16px; text-align: center; position: relative; overflow: visible; box-shadow: inset -1px -1px #3584e4, inset -2px -2px #fff, inset 0 1px #fff; }
.handle { position: absolute; right: -2px; bottom: -3px; width: 4px; height: 4px; background: #3584e4; border: 1px solid #fff; border-right: 0; z-index: 1; }
.sub { background: #14b8a6; color: #fff; font-weight: 700; text-align: center; border-top: 1px solid #3584e4; }
.banner { background: #14b8a6; font-size: 10px; line-height: 12px; padding-left: 1px; }
.key { background: #ccfbf1; font-weight: 700; padding-left: 1px; border-bottom: 1px solid #c9d6d2; border-right: 1px solid #c9d6d2; }
.txt { padding-left: 1px; border-bottom: 1px solid #d3d3d3; }
.vscroll { width: 10px; background: #cecece; border-top: 1px solid #c4c4c4; flex: none; display: flex; justify-content: center; }
.vscroll span { width: 6px; height: 38%; margin-top: 3px; border-radius: 3px; background: #7f8080; }
.hscroll { height: 10px; margin-right: 10px; background: #cecece; display: flex; align-items: center; justify-content: space-between; padding-left: 2px; flex: none; }
.hscroll span { width: 47%; height: 6px; border-radius: 3px; background: #7f8080; }
.hscroll b { width: 1px; height: 7px; margin-right: 1px; background: #333; }
.tabs { display: flex; height: 16px; align-items: center; padding-left: 6px; font-size: 8px; flex: none; }
.navs { width: 60px; height: 14px; margin-right: 8px; }
.add { width: 18px; }
.add svg { width: 14px; height: 14px; }
.tab { height: 14px; line-height: 14px; padding: 0 9px; position: relative; }
.tab + .tab { background: linear-gradient(#c8c6c3, #c8c6c3) left center / 1px 9px no-repeat; padding-left: 10px; }
.tab + .tab.active { background: #fff; font-weight: 700; border-bottom: 2px solid #8a8a8a; }
.side { width: 38px; border-left: 1px solid #d2cfcc; display: flex; flex-direction: column; align-items: center; gap: 13px; padding-top: 8px; }
.side button { height: 16px; }
.side .fx { font-size: 16px; }
.grip { position: absolute; right: 35px; top: 270px; width: 4px; height: 50px; background: #909090; }
.status { height: 16px; border-top: 1px solid #d2cfcc; display: grid; align-items: center; font-size: 8px; flex: none;
  grid-template-columns: 21px 154fr 219fr 216fr 165fr 46fr 30fr 20fr 20fr 180fr 96px 33px; }
.status > span { height: 12px; line-height: 12px; padding-left: 5px; border-left: 1px solid #dedcd9; white-space: nowrap; }
.status > .ico:first-child { border: 0; }
.ico svg { width: 12px; height: 12px; }
.ico .mode { width: 20px; height: 13px; }
.status .mid { text-align: center; padding: 0; }
.status .zoom { display: flex; align-items: center; gap: 2px; padding-right: 4px; }
.zoom button { width: 8px; font-size: 13px; font-weight: 700; line-height: 12px; color: #222; }
.zoom input { appearance: none; flex: 1; height: 12px; background: linear-gradient(#9a9a9a, #9a9a9a) center / 100% 1px no-repeat; }
.zoom input::-webkit-slider-thumb { appearance: none; width: 3px; height: 7px; border: 1px solid #444; background: #eee; box-sizing: border-box; }
</style>
